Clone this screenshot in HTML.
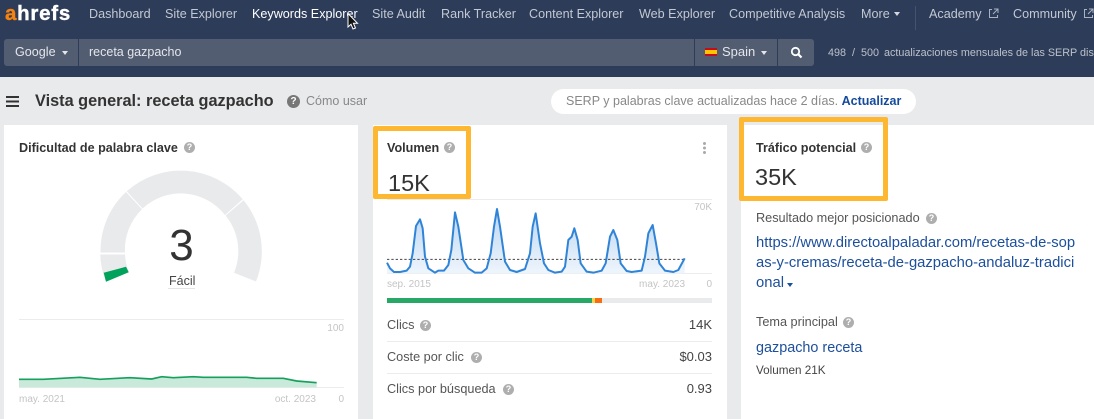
<!DOCTYPE html>
<html lang="es"><head><meta charset="utf-8"><title>Ahrefs</title>
<style>
html,body{margin:0;padding:0;width:1094px;height:419px;overflow:hidden;background:#e9eaec}
body{position:relative;font-family:"Liberation Sans",sans-serif;color:#333;filter:blur(.3px)}
.a{position:absolute;white-space:nowrap}
.n{top:6px;font-size:12.6px;line-height:16px;color:#c3c8d2}
.w{top:44px;font-size:12.6px;line-height:16px;color:#e4e6ea}
.card{position:absolute;top:125px;height:294px;background:#fff}
.t{font-size:12.6px;font-weight:bold;line-height:16px;color:#333}
.l{font-size:12.7px;line-height:16px;color:#555}
.v{font-size:13px;line-height:16px;color:#444}
.s{font-size:10px;line-height:14px;color:#c4c4c4}
.q{position:absolute;width:11px;height:11px;border-radius:50%;background:#aeaeae;color:#fff;font-size:9px;font-weight:bold;line-height:11px;text-align:center}
.b{font-size:14.8px;line-height:20px;color:#1c4f9c}
.c{position:absolute;width:0;height:0;border-left:3.5px solid transparent;border-right:3.5px solid transparent;border-top:4px solid #d5d8de}
.h{position:absolute;height:1px;background:#ececee}
.z{top:46px;font-size:10.8px;line-height:14px;color:#bcc1cb}
</style></head><body>
<div class="a" style="left:0;top:0;width:1094px;height:77px;background:#2d3c58"></div>

<div class="a" style="left:5px;top:2px;font-size:20.5px;line-height:24px;font-weight:bold;color:#fff;letter-spacing:.75px;-webkit-text-stroke:.4px #fff"><span style="color:#f7820d;-webkit-text-stroke:.4px #f7820d">a</span>hrefs</div>
<span class="a n" style="left:89px">Dashboard</span>
<span class="a n" style="left:165px">Site Explorer</span>
<span class="a n" style="left:252px;color:#fff">Keywords Explorer</span>
<span class="a n" style="left:372px">Site Audit</span>
<span class="a n" style="left:441px">Rank Tracker</span>
<span class="a n" style="left:529px">Content Explorer</span>
<span class="a n" style="left:639px">Web Explorer</span>
<span class="a n" style="left:729px">Competitive Analysis</span>
<span class="a n" style="left:861px">More</span>
<span class="c" style="left:894px;top:12px"></span>
<div class="a" style="left:915px;top:6px;width:1px;height:24px;background:#46536c"></div>
<span class="a n" style="left:929px">Academy</span>
<span class="a n" style="left:1013px">Community</span>
<svg class="a" style="left:988px;top:8px" width="11" height="11" viewBox="0 0 11 11" fill="none" stroke="#aab1bf" stroke-width="1"><path d="M4 1.5H1.5V9.5H9.5V7M6 1H10V5M10 1L5 6"/></svg>
<svg class="a" style="left:1083px;top:8px" width="11" height="11" viewBox="0 0 11 11" fill="none" stroke="#aab1bf" stroke-width="1"><path d="M4 1.5H1.5V9.5H9.5V7M6 1H10V5M10 1L5 6"/></svg>

<div class="a" style="left:4px;top:39px;width:810px;height:27px;background:#525d72;border-radius:3px"></div>
<div class="a" style="left:78px;top:39px;width:1px;height:27px;background:#2d3c58"></div>
<div class="a" style="left:694px;top:39px;width:1px;height:27px;background:#2d3c58"></div>
<div class="a" style="left:777px;top:39px;width:1px;height:27px;background:#2d3c58"></div>
<span class="a w" style="left:15px">Google</span>
<span class="c" style="left:62px;top:51px;border-top-color:#e4e6ea"></span>
<span class="a w" style="left:89px;font-size:12.5px">receta gazpacho</span>
<div class="a" style="left:705px;top:48px;width:12px;height:8px;background:linear-gradient(#c60b1e 0 25%,#ffc400 25% 75%,#c60b1e 75%)"></div>
<span class="a w" style="left:722px;font-size:13px">Spain</span>
<span class="c" style="left:761px;top:51px;border-top-color:#e4e6ea"></span>
<svg class="a" style="left:790px;top:46px" width="13" height="13" viewBox="0 0 13 13" fill="none" stroke="#fff"><circle cx="5.5" cy="5.5" r="3.7" stroke-width="1.8"/><path d="M8.2 8.2L11.5 11.5" stroke-width="2.2"/></svg>
<span class="a z" style="left:828px">498</span>
<span class="a z" style="left:852px">/</span>
<span class="a z" style="left:861px">500</span>
<span class="a z" style="left:884px">actualizaciones mensuales de las SERP dis</span>

<div class="a" style="left:6px;top:96px;width:13px;height:2px;background:#333;box-shadow:0 4.5px 0 #333,0 9px 0 #333"></div>
<span class="a" style="left:35px;top:92px;font-size:16.3px;line-height:19px;font-weight:bold;color:#333">Vista general: receta gazpacho</span>
<span class="q" style="left:287px;top:95px;width:13px;height:13px;line-height:13px;font-size:10px;background:#777">?</span>
<span class="a" style="left:306px;top:93px;font-size:12.5px;line-height:16px;color:#888">Cómo usar</span>
<div class="a" style="left:551px;top:89px;width:365px;height:25px;border-radius:13px;background:#fff"></div>
<span class="a" style="left:566px;top:93px;font-size:12.5px;line-height:16px;color:#888">SERP y palabras clave actualizadas hace 2 días. <b style="color:#134a9c">Actualizar</b></span>

<div class="card" style="left:4px;width:354px"></div>
<div class="card" style="left:373px;width:354px"></div>
<div class="card" style="left:741px;width:353px"></div>

<span class="a t" style="left:19px;top:140px">Dificultad de palabra clave</span>
<span class="q" style="left:184px;top:142px">?</span>

<svg class="a" style="left:0;top:0" width="1094" height="419" viewBox="0 0 1094 419">
<path d="M100.5 252.5A80.5 80.5 0 0 1 126 192L142 209.3A56 56 0 0 0 125 252.5Z" fill="#e9eaec"/>
<path d="M126.8 191.3A81 81 0 0 1 242.7 199.3L225 215A56 56 0 0 0 142.6 208.5Z" fill="#e9eaec"/>
<path d="M243.6 200.2A81 81 0 0 1 256 281.5L234 272.7A56 56 0 0 0 225.6 215.6Z" fill="#e9eaec"/>
<path d="M100.2 254.5L125 254.5A56 56 0 0 0 129 272.3L106 281.7A81 81 0 0 1 100.2 254.5Z" fill="#e9eaec"/>
<path d="M103.7 272.7L126 266.7L128.7 272.3L106 281.7Z" fill="#00a25c"/>
<rect x="168" y="288" width="27" height="1" fill="#e4e4e4"/>
<rect x="19" y="319" width="325" height="1" fill="#ececee"/>
<rect x="19" y="387" width="325" height="1" fill="#ececee"/>
<g transform="translate(0 120) scale(.33333)">
<path d="M57 778L130 778L240 772L300 778L390 773L455 777L485 770L520 773L580 770L610 772L740 772L770 775L850 775L890 783L950 788V802H57Z" fill="#c9e9da"/>
<path d="M57 778L130 778L240 772L300 778L390 773L455 777L485 770L520 773L580 770L610 772L740 772L770 775L850 775L890 783L950 788" fill="none" stroke="#16a05d" stroke-width="5"/>
</g>
<rect x="387" y="199" width="325" height="1" fill="#ececee"/>
<rect x="387" y="273" width="325" height="1" fill="#ececee"/>
<defs><linearGradient id="f" x1="0" y1="0" x2="0" y2="1"><stop offset="0" stop-color="#bcd6f2"/><stop offset="1" stop-color="#eef5fc"/></linearGradient></defs>
<g transform="translate(370 120) scale(.33333)">
<path d="M51 428L60 445L72 456L90 456L110 452L120 440L128 400L138 318L150 298L158 325L165 410L175 445L195 458L205 452L222 452L235 435L244 390L255 277L265 320L280 420L295 445L315 458L335 458L350 445L362 400L372 320L381 267L390 320L405 425L420 450L440 456L465 447L480 400L488 320L497 280L510 370L522 430L535 450L555 458L575 455L585 440L595 360L605 350L613 325L623 360L632 430L650 455L670 458L695 452L707 430L720 350L730 330L742 360L752 430L770 453L785 456L815 452L825 410L835 340L848 315L858 370L868 430L885 452L910 456L925 450L944 415V460H51Z" fill="url(#f)"/>
<path d="M51 418H944" stroke="#444" stroke-width="3" stroke-dasharray="7 6" fill="none"/>
<path d="M51 428L60 445L72 456L90 456L110 452L120 440L128 400L138 318L150 298L158 325L165 410L175 445L195 458L205 452L222 452L235 435L244 390L255 277L265 320L280 420L295 445L315 458L335 458L350 445L362 400L372 320L381 267L390 320L405 425L420 450L440 456L465 447L480 400L488 320L497 280L510 370L522 430L535 450L555 458L575 455L585 440L595 360L605 350L613 325L623 360L632 430L650 455L670 458L695 452L707 430L720 350L730 330L742 360L752 430L770 453L785 456L815 452L825 410L835 340L848 315L858 370L868 430L885 452L910 456L925 450L944 415" fill="none" stroke="#2f84d8" stroke-width="6" stroke-linejoin="round"/>
</g>
</svg>

<span class="a" style="left:168px;top:221px;width:27px;text-align:center;font-size:44px;line-height:50px;color:#333">3</span>
<span class="a" style="left:169px;top:273px;font-size:12.5px;line-height:16px;color:#444">Fácil</span>
<span class="a s" style="right:750px;top:322px">100</span>
<span class="a s" style="left:19px;top:393px">may. 2021</span>
<span class="a s" style="right:778px;top:393px">oct. 2023</span>
<span class="a s" style="right:750px;top:393px">0</span>

<span class="a t" style="left:387px;top:140px">Volumen</span>
<span class="q" style="left:444px;top:142px">?</span>
<span class="a" style="left:388px;top:169px;font-size:23.5px;line-height:28px;color:#333">15K</span>
<div class="a" style="left:703px;top:142px;width:3px;height:3px;border-radius:50%;background:#aaa;box-shadow:0 4.5px 0 #aaa,0 9px 0 #aaa"></div>
<span class="a s" style="right:382px;top:201px">70K</span>
<span class="a s" style="left:387px;top:278px">sep. 2015</span>
<span class="a s" style="right:409px;top:278px">may. 2023</span>
<span class="a s" style="right:382px;top:278px">0</span>
<div class="a" style="left:387px;top:298px;width:325px;height:5px;background:#e9eaec"></div>
<div class="a" style="left:387px;top:298px;width:205px;height:5px;background:#27a866"></div>
<div class="a" style="left:592px;top:298px;width:3px;height:5px;background:#f7d44c"></div>
<div class="a" style="left:595px;top:298px;width:7px;height:5px;background:#f86c12"></div>
<span class="a l" style="left:387px;top:317px">Clics</span><span class="q" style="left:420px;top:320px">?</span>
<span class="a v" style="right:382px;top:317px">14K</span>
<div class="h" style="left:387px;top:341px;width:325px"></div>
<span class="a l" style="left:387px;top:349px">Coste por clic</span><span class="q" style="left:471px;top:352px">?</span>
<span class="a v" style="right:382px;top:349px">$0.03</span>
<div class="h" style="left:387px;top:373px;width:325px"></div>
<span class="a l" style="left:387px;top:381px">Clics por búsqueda</span><span class="q" style="left:503px;top:384px">?</span>
<span class="a v" style="right:382px;top:381px">0.93</span>

<span class="a t" style="left:756px;top:140px">Tráfico potencial</span>
<span class="q" style="left:861px;top:142px">?</span>
<span class="a" style="left:755px;top:163px;font-size:23.5px;line-height:28px;color:#333">35K</span>
<span class="a l" style="left:756px;top:210px">Resultado mejor posicionado</span><span class="q" style="left:926px;top:213px">?</span>
<span class="a b" style="left:756px;top:233px">https://www.directoalpaladar.com/recetas-de-sop</span>
<span class="a b" style="left:756px;top:253px">as-y-cremas/receta-de-gazpacho-andaluz-tradici</span>
<span class="a b" style="left:756px;top:273px">onal</span>
<span class="c" style="left:787px;top:283px;border-top-color:#1c4f9c"></span>
<span class="a l" style="left:756px;top:314px">Tema principal</span><span class="q" style="left:843px;top:317px">?</span>
<span class="a b" style="left:756px;top:338px;font-size:14.4px">gazpacho receta</span>
<span class="a" style="left:756px;top:363px;font-size:11.7px;line-height:15px;color:#444">Volumen 21K</span>

<div class="a" style="left:373px;top:126px;width:88px;height:63px;border:5px solid #fdb730;border-radius:2px"></div>
<div class="a" style="left:739px;top:117px;width:139px;height:74px;border:5px solid #fdb730;border-radius:2px"></div>

<svg class="a" style="left:345px;top:12px" width="16" height="20" viewBox="0 0 16 20"><path d="M3 1.5V15L6 12.2L8 17L10.5 16L8.4 11.3H12.5Z" fill="#111" stroke="#fff" stroke-width="1"/></svg>
</body></html>
